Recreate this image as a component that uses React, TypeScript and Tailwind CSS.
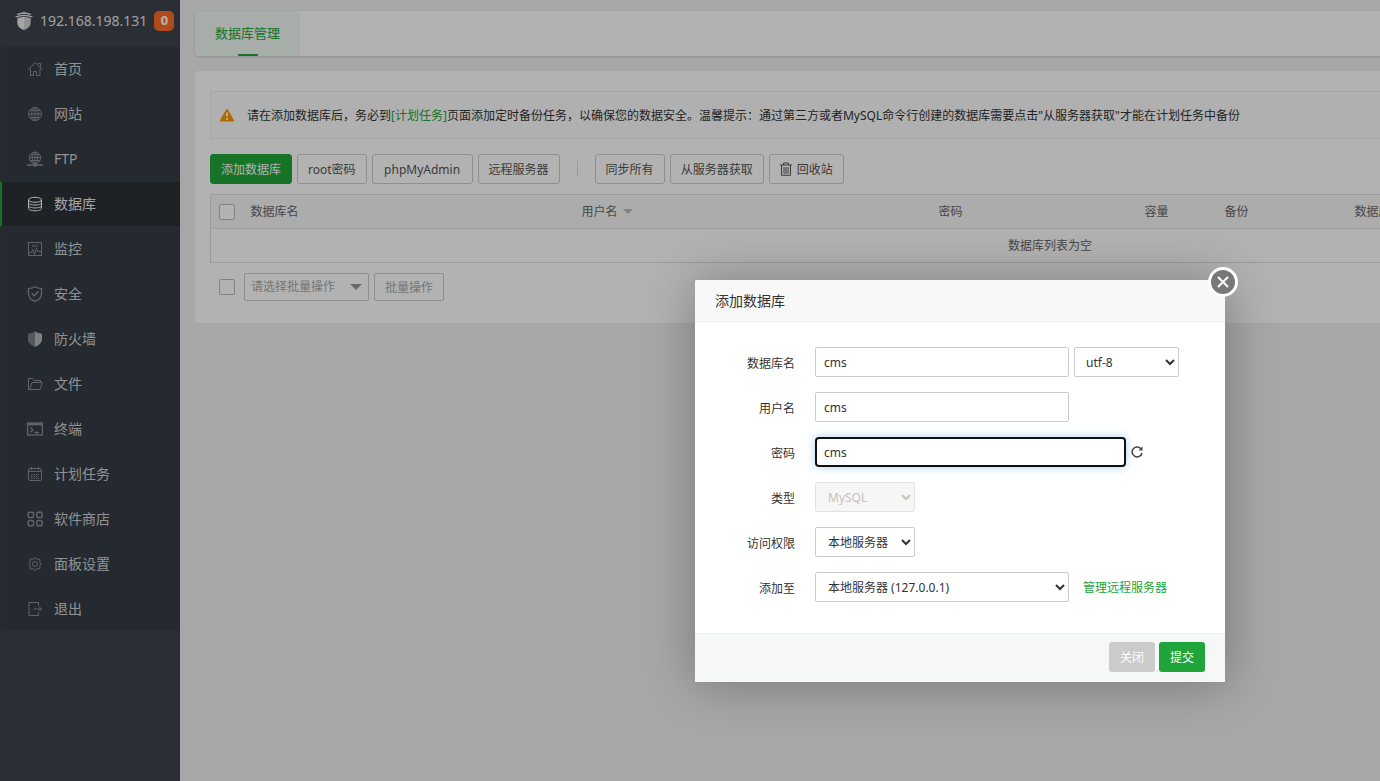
import React from "react";

type IconProps = { children: React.ReactNode };

function Icon({ children }: IconProps) {
  return (
    <svg
      viewBox="0 0 16 16"
      className="size-4 shrink-0"
      fill="none"
      stroke="currentColor"
      strokeWidth="1"
      aria-hidden="true"
    >
      {children}
    </svg>
  );
}

const menu: { label: string; icon: React.ReactNode }[] = [
  {
    label: "首页",
    icon: (
      <Icon>
        <path d="M1 9 8.200 1.500 15.500 9M3.500 8V14.500H6.500V10.500H9.500V14.500H13V8M11 3V2.500H13.500V6.500" />
      </Icon>
    ),
  },
  {
    label: "网站",
    icon: (
      <Icon>
        <circle cx="8" cy="8" r="6.500" />
        <ellipse cx="8" cy="8" rx="3.300" ry="6.500" />
        <path d="M8 1.500v13M1.500 8h13M2.500 4.500h11M2.500 11.500h11" />
      </Icon>
    ),
  },
  {
    label: "FTP",
    icon: (
      <Icon>
        <circle cx="8" cy="6.800" r="5.700" />
        <ellipse cx="8" cy="6.800" rx="2.800" ry="5.700" />
        <path d="M8 1v12M2.300 6.500h11.400M3 3.800h10M3 9.500h10" />
        <path d="M0 14h16" strokeWidth="1.500" />
        <circle cx="8" cy="14" r="1.500" fill="currentColor" />
      </Icon>
    ),
  },
  {
    label: "数据库",
    icon: (
      <Icon>
        <ellipse cx="8" cy="3.800" rx="6.500" ry="2.500" />
        <path d="M1.500 3.800v8.700c0 1.300 2.900 2.300 6.500 2.300s6.500-1 6.500-2.300V3.800M1.500 6.800C1.500 8.100 4.400 9 8 9s6.500-.9 6.500-2.200M1.500 9.700c0 1.300 2.900 2.200 6.500 2.200s6.500-.9 6.500-2.200" />
      </Icon>
    ),
  },
  {
    label: "监控",
    icon: (
      <Icon>
        <rect x="1.500" y="1.500" width="13" height="13" />
        <path d="M1.500 11.500H4L6 8.500 7.500 13.500 9.500 7.500 11 10.500H14.500" />
        <path d="M5 4h6M5 5.500h6" strokeOpacity=".6" />
      </Icon>
    ),
  },
  {
    label: "安全",
    icon: (
      <Icon>
        <path d="M8 .8C10 2 12 2.500 14.500 2.700V7.500C14.500 11 12 13.800 8 15.300 4 13.800 1.500 11 1.500 7.500V2.700C4 2.500 6 2 8 .8Z" strokeWidth="1.300" />
        <path d="M4.800 7.300 7.200 9.700 11.500 5.400" strokeWidth="1.500" />
      </Icon>
    ),
  },
  {
    label: "防火墙",
    icon: (
      <Icon>
        <path d="M8 0V16C4 14 1 12 1 8V3L2.500 2V3L4 1.500V2.500L6 1V2Z" fill="currentColor" fillOpacity=".8" stroke="none" />
        <path d="M8 0V16C12 14 15 12 15 8V3L13.500 2V3L12 1.500V2.500L10 1V2Z" fill="#b5b7ba" stroke="none" />
      </Icon>
    ),
  },
  {
    label: "文件",
    icon: (
      <Icon>
        <path d="M1.500 13.500V2.500H5.500L7 4.500H13.500V6.500M1.500 13.500H13L15.300 6.500H5L2.500 13.500" strokeLinejoin="round" />
      </Icon>
    ),
  },
  {
    label: "终端",
    icon: (
      <Icon>
        <rect x=".6" y="2" width="14.800" height="12" strokeWidth="1.300" />
        <path d="M.6 3.200h14.800" strokeWidth="2.400" />
        <path d="M3.500 6.500 6 8.900 3.500 11.300M7.500 11.500H12" strokeWidth="1.300" />
      </Icon>
    ),
  },
  {
    label: "计划任务",
    icon: (
      <Icon>
        <rect x="1.500" y="2.500" width="13" height="12" rx="1.500" />
        <path d="M1.500 5.500h13M4.500 1v3M11.500 1v3" />
        <path d="M4 8.500h8M4 10.500h8M4 12.500h8" strokeDasharray="1.500 1" />
      </Icon>
    ),
  },
  {
    label: "软件商店",
    icon: (
      <Icon>
        <rect x="1.200" y="1.200" width="5.300" height="5.300" rx="1.200" strokeWidth="1.500" />
        <rect x="9.800" y="1.200" width="5.300" height="5.300" rx="1.200" strokeWidth="1.500" />
        <rect x="1.200" y="9.500" width="5.300" height="5.300" rx="1.200" strokeWidth="1.500" />
        <rect x="9.800" y="9.500" width="5.300" height="5.300" rx="1.200" strokeWidth="1.500" />
      </Icon>
    ),
  },
  {
    label: "面板设置",
    icon: (
      <Icon>
        <path
          d="M8 1.500 9.400 3.300 11 3 12.700 3.300 13 5 12.700 6.600 14.500 8 12.700 9.400 13 11 12.700 12.700 11 13 9.400 12.700 8 14.500 6.600 12.700 5 13 3.300 12.700 3 11 3.300 9.400 1.500 8 3.300 6.600 3 5 3.300 3.300 5 3 6.600 3.300Z"
          strokeLinejoin="round"
        />
        <circle cx="8" cy="8" r="2.500" />
      </Icon>
    ),
  },
  {
    label: "退出",
    icon: (
      <Icon>
        <path d="M11.500 4.500V1.500H2V14.500H11.500V11.500M6.500 8H14.500M12 5.500 14.500 8 12 10.500" strokeLinejoin="round" />
      </Icon>
    ),
  },
];

function Logo() {
  return (
    <svg viewBox="0 0 18 19" className="h-[19px] w-[18px]" aria-hidden="true">
      <path d="M9 0 9.800 1.500C12 1.500 14.500 2 16 3.200L15.800 4C12 2.500 6 2.500 2.200 4L2 3.200C3.500 2 6 1.500 8.200 1.500Z" fill="#e8e8e8" />
      <path d="M0 5.800C5 3 13 3 18 5.800L16.500 6.500C12 4.700 6 4.700 1.500 6.500Z" fill="#e8e8e8" />
      <path d="M9 6V19C5 17.500 2.500 15.500 2.300 12V7.500C4 6.500 6.500 6 9 6Z" fill="#ececec" />
      <path d="M9 6V19C13 17.500 15.500 15.500 15.700 12V7.500C14 6.500 11.500 6 9 6Z" fill="#cfd1d3" />
    </svg>
  );
}

function Sidebar() {
  return (
    <aside className="w-[180px] shrink-0 bg-[#3c444d]">
      <div className="flex h-[47px] items-center pb-1.5 pl-[15px]">
        <Logo />
        <span className="ml-[7px] text-sm text-[#e4e5e7]">192.168.198.131</span>
        <span className="ml-[7px] flex size-5 items-center justify-center rounded-[5px] bg-[#fc6d26] text-[13px] font-bold text-white">
          0
        </span>
      </div>
      <nav className="bg-[#363d46]">
        <ul className="flex flex-col gap-px">
          {menu.map((item) => {
            const active = item.label === "数据库";
            return (
              <li key={item.label}>
                <a
                  href="#"
                  className={
                    active
                      ? "flex h-11 items-center gap-[11px] border-l-2 border-[#20a53a] bg-[#2c3138] pl-[25px] text-sm text-white"
                      : "flex h-11 items-center gap-[11px] border-l-2 border-[#3b403d] pl-[25px] text-sm text-[#8b8e93]"
                  }
                >
                  {item.icon}
                  <span className={active ? "text-[#e8e8e8]" : "text-[#ced0d3]"}>{item.label}</span>
                </a>
              </li>
            );
          })}
        </ul>
      </nav>
    </aside>
  );
}

function ToolButton({ children }: { children: React.ReactNode }) {
  return (
    <button
      type="button"
      className="flex h-[30px] items-center justify-center gap-[5px] rounded-[3px] border border-[#ccc] bg-white px-2.5 pt-0.5 text-[#555]"
    >
      {children}
    </button>
  );
}

function Check({ label }: { label: string }) {
  return (
    <input
      type="checkbox"
      aria-label={label}
      className="block size-4 appearance-none rounded-[2px] border border-[#bbb] bg-white"
    />
  );
}

function TrashIcon() {
  return (
    <svg viewBox="0 0 12 14" className="mb-0.5 h-3.5 w-3" fill="none" stroke="currentColor" aria-hidden="true">
      <path d="M0 3h12M3.500 3V1h5v2M1.500 3v10.300h9V3M4 5v7M6 5v7M8 5v7" />
    </svg>
  );
}

function Content() {
  return (
    <main className="flex min-w-0 flex-1 flex-col gap-[15px] py-[11px] px-[15px]">
      <div className="flex h-[45px] rounded bg-white shadow-[0_1px_3px_rgba(0,0,0,0.15)]">
        <a
          href="#"
          className="relative flex w-[105px] items-center justify-center rounded-l bg-[#eff8f1] text-[13px] text-[#20a53a]"
        >
          数据库管理
          <span className="absolute bottom-0 h-0.5 w-5 bg-[#20a53a]" />
        </a>
      </div>

      <section className="rounded bg-white px-[15px] pt-5 pb-[22px]">
        <div className="flex h-12 items-center gap-3 rounded-[2px] border border-[#eee] bg-[#fdfdfd] pl-2 text-[#333]">
          <svg viewBox="0 0 16 14" className="h-3.5 w-4" aria-hidden="true">
            <path d="M8 1 15 13H1Z" fill="#f90" stroke="#f90" strokeLinejoin="round" />
            <path d="M8 4.500v4M8 10v2" stroke="#fff" strokeWidth="1.800" />
          </svg>
          <p className="pt-0.5">
            请在添加数据库后，务必到<a href="#" className="text-[#20a53a]">[计划任务]</a>
            页面添加定时备份任务，以确保您的数据安全。温馨提示：通过第三方或者MySQL命令行创建的数据库需要点击"从服务器获取"才能在计划任务中备份
          </p>
        </div>

        <div className="mt-[15px] flex items-center gap-[5px]">
          <button type="button" className="h-[30px] rounded-[3px] border border-[#20a53a] bg-[#20a53a] px-2.5 pt-0.5 text-white">
            添加数据库
          </button>
          <ToolButton>root密码</ToolButton>
          <ToolButton>
            <span className="min-w-[79px]">phpMyAdmin</span>
          </ToolButton>
          <ToolButton>远程服务器</ToolButton>
          <span className="mx-3 h-4 w-px bg-[#ddd]" />
          <ToolButton>同步所有</ToolButton>
          <ToolButton>从服务器获取</ToolButton>
          <ToolButton>
            <TrashIcon />
            回收站
          </ToolButton>
        </div>

        <table className="mt-2.5 w-full table-fixed border-collapse border border-[#ddd] text-[#666]">
          <thead>
            <tr className="h-[34px] border-b border-[#e3e3e3] bg-[#f6f6f6] text-left">
              <th className="w-8 pl-2 font-normal">
                <Check label="全选" />
              </th>
              <th className="w-[331px] pl-2 font-normal">数据库名</th>
              <th className="w-[357px] pl-2 font-normal">
                <span className="flex items-center gap-[5px]">
                  用户名
                  <svg viewBox="0 0 10 5" className="h-[5px] w-2.5" aria-hidden="true">
                    <path d="M0 0H10L5 5Z" fill="#bbb" />
                  </svg>
                </span>
              </th>
              <th className="w-[206px] pl-2 font-normal">密码</th>
              <th className="w-20 pl-2 font-normal">容量</th>
              <th className="w-[130px] pl-2 font-normal">备份</th>
              <th className="pl-2 font-normal">数据库位置</th>
            </tr>
          </thead>
          <tbody>
            <tr className="h-[34px]">
              <td colSpan={7} className="text-center">
                数据库列表为空
              </td>
            </tr>
          </tbody>
        </table>

        <div className="mt-2.5 flex items-center gap-[5px] pl-[9px]">
          <Check label="选择全部" />
          <div className="relative ml-1 text-[#aaa]">
            <select
              aria-label="批量操作"
              className="block h-7 w-[125px] appearance-none rounded-[2px] border border-[#ccc] bg-white px-1.5 text-[#aaa]"
            >
              <option>请选择批量操作</option>
            </select>
            <svg viewBox="0 0 12 6" className="pointer-events-none absolute top-[11px] right-[7px] h-1.5 w-3" aria-hidden="true">
              <path d="M0 0H12L6 6Z" fill="#999" />
            </svg>
          </div>
          <button type="button" className="h-7 rounded-[2px] border border-[#ccc] bg-white px-2.5 pt-0.5 text-[#aaa]">
            批量操作
          </button>
        </div>
      </section>
    </main>
  );
}

function Field({ id, label, children }: { id: string; label: string; children: React.ReactNode }) {
  return (
    <div className="flex h-[30px] items-center">
      <label htmlFor={id} className="w-[100px] pt-1 pr-5 text-right">
        {label}
      </label>
      {children}
    </div>
  );
}

function Dialog() {
  return (
    <div
      role="dialog"
      aria-label="添加数据库"
      className="relative w-[530px] rounded-[2px] bg-white text-[#333] shadow-[1px_1px_50px_rgba(0,0,0,0.3)]"
    >
      <button
        type="button"
        aria-label="关闭窗口"
        className="absolute -top-[13px] -right-[13px] flex size-[30px] items-center justify-center rounded-full border-[3px] border-white bg-[#787878]"
      >
        <svg viewBox="0 0 12 12" className="size-3" stroke="#fff" strokeWidth="2" aria-hidden="true">
          <path d="M1 1 11 11M11 1 1 11" />
        </svg>
      </button>
      <h2 className="flex h-[42px] items-center rounded-t-[2px] border-b border-[#eee] bg-[#f8f8f8] px-5 text-sm">
        添加数据库
      </h2>
      <form className="flex flex-col gap-[15px] px-5 pt-[25px] pb-[31px]">
        <Field id="name" label="数据库名">
          <input id="name" defaultValue="cms" className="h-[30px] w-[254px] rounded-[2px] border border-[#ccc] px-2" />
          <select aria-label="编码" className="ml-[5px] h-[30px] w-[105px] rounded-[2px] border border-[#ccc] bg-white px-[7px]">
            <option>utf-8</option>
          </select>
        </Field>
        <Field id="user" label="用户名">
          <input id="user" defaultValue="cms" className="h-[30px] w-[254px] rounded-[2px] border border-[#ccc] px-2" />
        </Field>
        <Field id="password" label="密码">
          <input
            id="password"
            defaultValue="cms"
            className="h-[30px] w-[311px] rounded-[4px] border-2 border-[#101010] px-[7px] shadow-[0_0_8px_rgba(102,175,233,0.6)] outline-none"
          />
          <button type="button" aria-label="随机密码" className="ml-[5px]">
            <svg viewBox="0 0 12 12" className="size-3" fill="none" stroke="#444" strokeWidth="1.500" aria-hidden="true">
              <path d="M10.200 3A5 5 0 1 0 11 7" />
              <path d="M11.500 .5V4.500H7.500Z" fill="#444" stroke="none" />
            </svg>
          </button>
        </Field>
        <Field id="type" label="类型">
          <select id="type" disabled className="h-[30px] w-[100px] rounded-[2px] border border-[#e2e2e2] bg-[#f6f6f6] px-2 text-[#c5c2bb]">
            <option>MySQL</option>
          </select>
        </Field>
        <Field id="access" label="访问权限">
          <select id="access" className="h-[30px] w-[100px] rounded-[2px] border border-[#ccc] bg-white px-2">
            <option>本地服务器</option>
          </select>
        </Field>
        <Field id="server" label="添加至">
          <select id="server" className="h-[30px] w-[254px] rounded-[2px] border border-[#ccc] bg-white px-2">
            <option>本地服务器 (127.0.0.1)</option>
          </select>
          <a href="#" className="ml-3.5 pt-0.5 text-[#20a53a]">
            管理远程服务器
          </a>
        </Field>
      </form>
      <footer className="flex h-[49px] items-center justify-end gap-1 border-t border-[#edf1f2] bg-[#f6f8f8] px-5 pb-0.5">
        <button type="button" className="h-[30px] rounded-[3px] bg-[#cbcbcb] px-[11px] pt-0.5 text-white">
          关闭
        </button>
        <button type="button" className="h-[30px] rounded-[3px] bg-[#20a53a] px-[11px] pt-0.5 text-white">
          提交
        </button>
      </footer>
    </div>
  );
}

export default function App() {
  return (
    <div className="h-screen overflow-hidden font-['Noto_Sans','Noto_Sans_CJK_SC',sans-serif] text-xs">
      <div className="relative flex min-h-full min-w-[1920px] bg-[#f0f0f1]">
        <Sidebar />
        <Content />
        <div className="absolute inset-0 flex items-start justify-center bg-black/30 pt-[280px]">
          <Dialog />
        </div>
      </div>
    </div>
  );
}
